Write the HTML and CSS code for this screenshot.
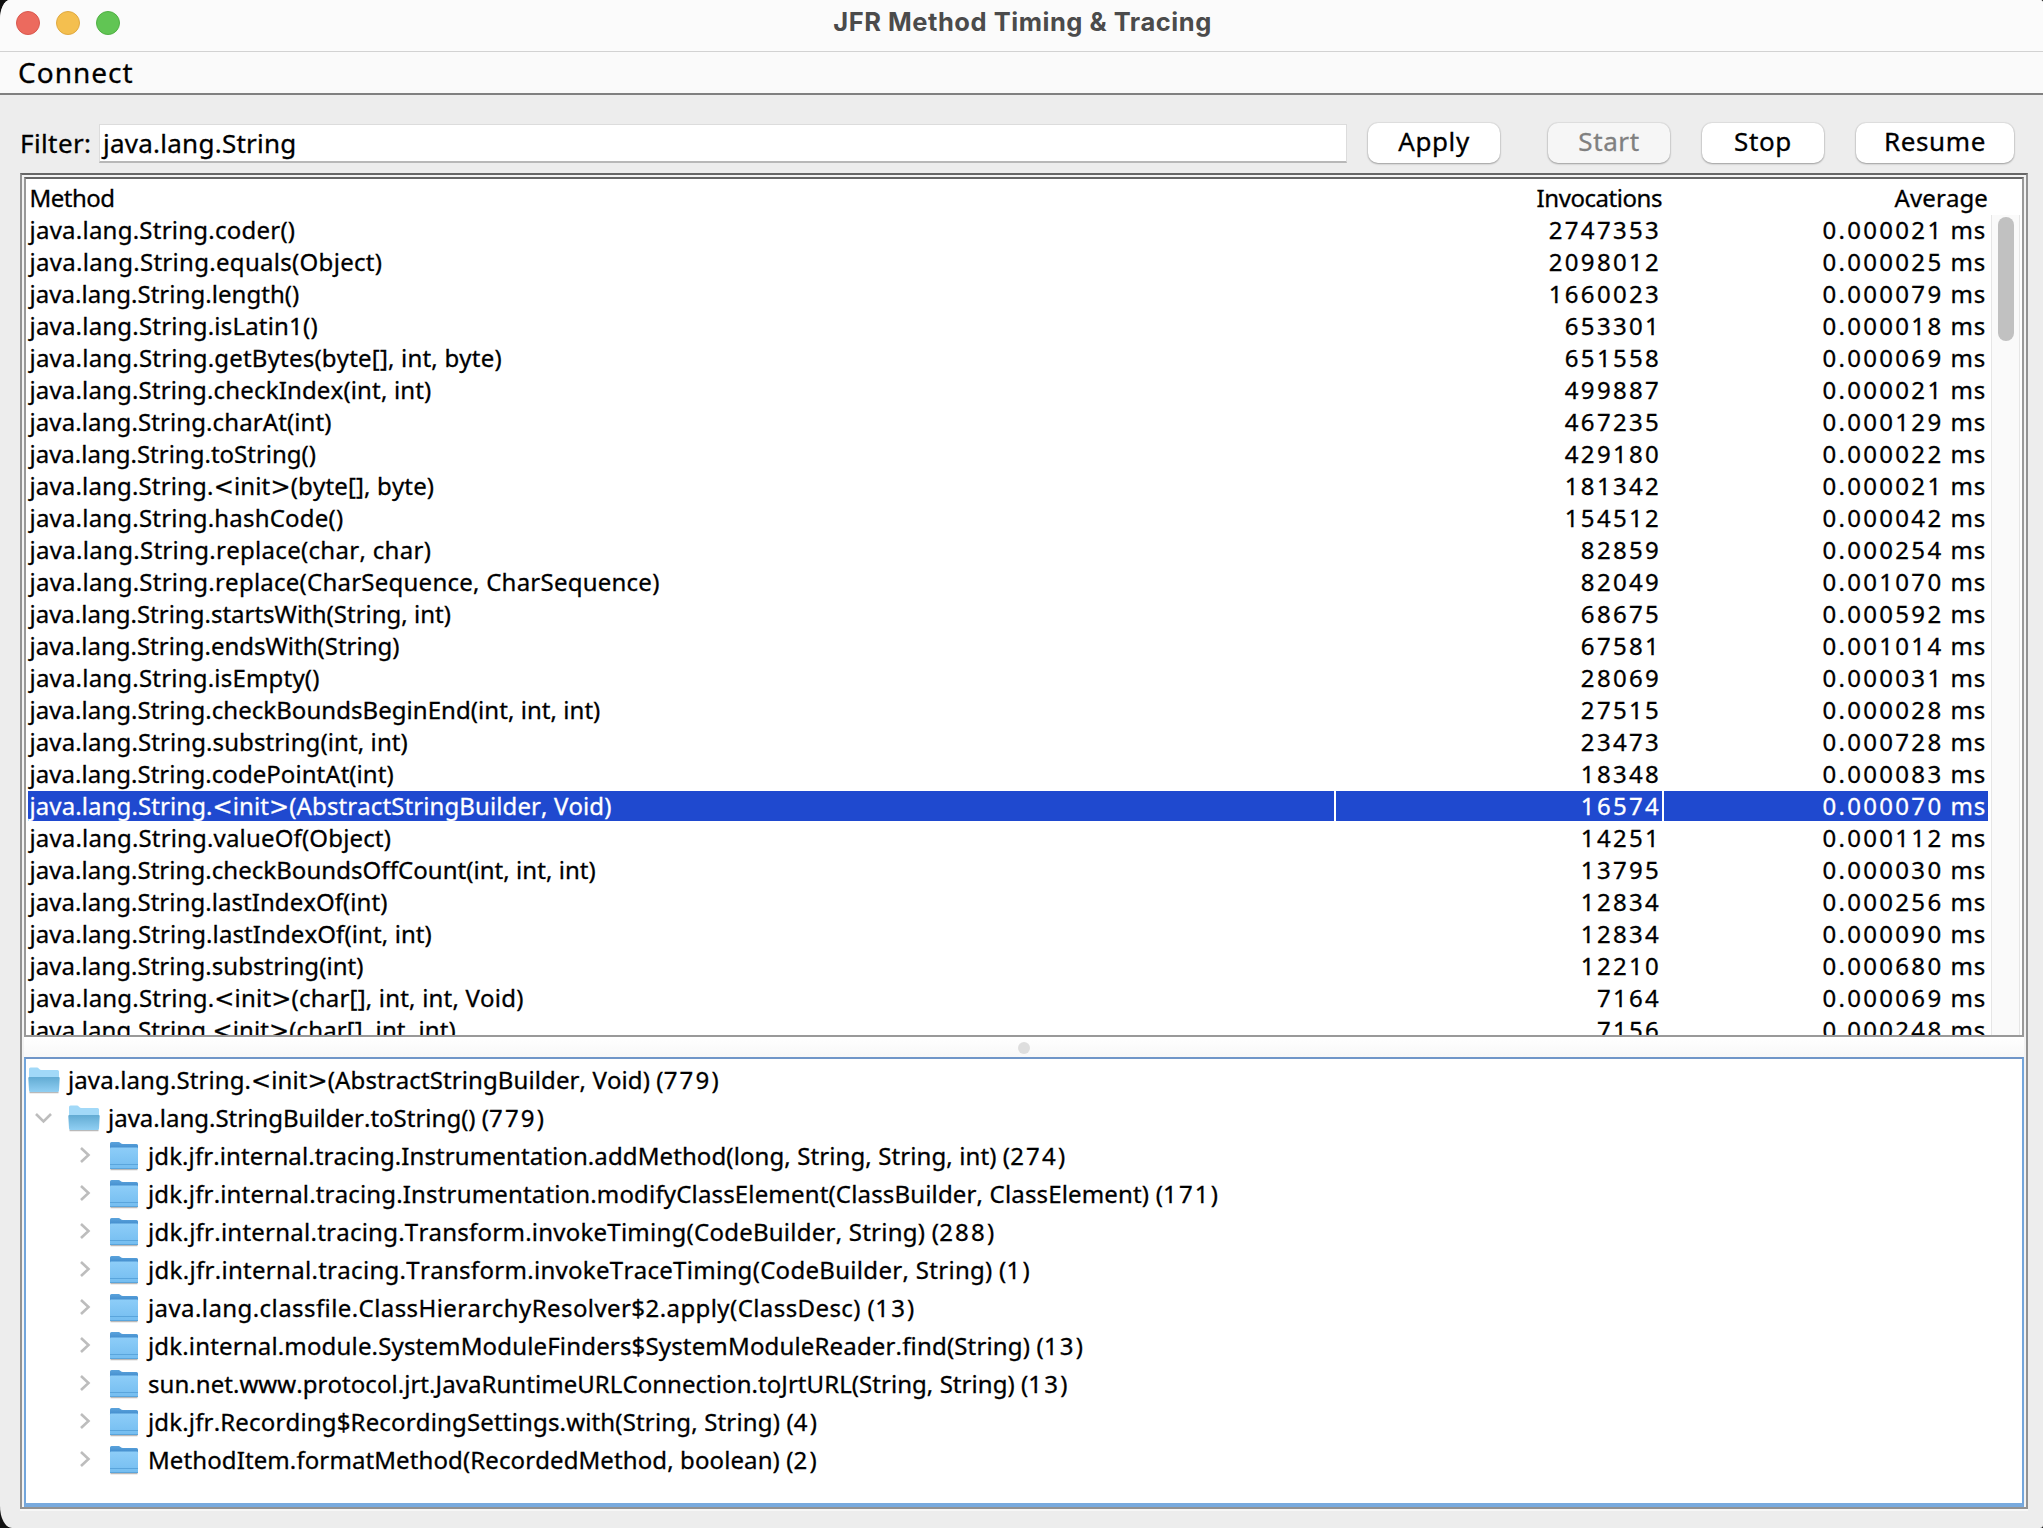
FILE: index.html
```html
<!DOCTYPE html>
<html lang="en">
<head>
<meta charset="utf-8">
<title>JFR Method Timing &amp; Tracing</title>
<link rel="stylesheet" href="styles.css">
</head>
<body>
<svg class="defs" width="0" height="0" aria-hidden="true">
  <defs>
    <linearGradient id="front" x1="0" y1="0" x2="0" y2="1"><stop offset="0" stop-color="#8dcdf8"/><stop offset="1" stop-color="#74bdf0"/></linearGradient>
    <linearGradient id="back" x1="0" y1="0" x2="0" y2="1"><stop offset="0" stop-color="#5ba3dc"/><stop offset="1" stop-color="#2f7cc2"/></linearGradient>
    <linearGradient id="lip" x1="0" y1="0" x2="0" y2="1"><stop offset="0" stop-color="#62abd3"/><stop offset="1" stop-color="#90cff3"/></linearGradient>
    <symbol id="folder" viewBox="0 0 32 32">
      <path d="M2.500 30.500h27" stroke="#b9b9b9" stroke-width="1.500"/>
      <path d="M2 4.500q0-1.500 1.500-1.500h7q1 0 2 1t2.500 1h13.500q1.500 0 1.500 1.500v8H2z" fill="url(#back)"/>
      <path d="M2 9.500q0-1 1-1h26q1 0 1 1V28.500q0 1.500-1.500 1.500h-25q-1.500 0-1.500-1.500z" fill="url(#front)"/>
      <path d="M2 25.500h28M2 29.500h28" stroke="#5aa5dc" stroke-width="1"/>
    </symbol>
    <symbol id="folder-open" viewBox="0 0 32 32">
      <path d="M1.500 29.500h29" stroke="#b9b9b9" stroke-width="1.500"/>
      <path d="M1 6q0-1.500 1.500-1.500h6.500q1 0 2 1.200t2.500 1.300H29.500q1.500 0 1.500 1.500v8H1z" fill="#a2d9f8"/>
      <path d="M.3 15q0-1 1-1h29.400q1 0 1 1l-.7 12.500q0 1.500-1.500 1.500H2.500q-1.500 0-1.500-1.500z" fill="url(#lip)"/>
    </symbol>
    <symbol id="right" viewBox="0 0 16 20"><path d="M5 3l7.500 7L5 17" fill="none" stroke="#bdbdbd" stroke-width="2.600"/></symbol>
    <symbol id="down" viewBox="0 0 20 16"><path d="M2 4l7.500 7.500L17 4" fill="none" stroke="#bdbdbd" stroke-width="2.600"/></symbol>
  </defs>
</svg>
<div class="window">
  <header class="titlebar">
    <div class="lights"><i class="light red"></i><i class="light yellow"></i><i class="light green"></i></div>
    <h1 class="title">JFR Method Timing &amp; Tracing</h1>
  </header>
  <nav class="menubar">Connect</nav>
  <div class="toolbar">
    <label class="label">Filter:</label>
    <div class="field">java.lang.String</div>
    <button class="btn apply">Apply</button>
    <button class="btn start" disabled>Start</button>
    <button class="btn stop">Stop</button>
    <button class="btn resume">Resume</button>
  </div>
  <main class="split">
    <section class="table">
      <div class="row head"><span>Method</span><span>Invocations</span><span class="avg">Average</span></div>
      <div class="scroll">
        <div class="rows">
          <div class="row w25"><span>java.lang.String.coder()</span><span>2747353</span><span>0.000021<i> ms</i></span></div>
          <div class="row w30"><span>java.lang.String.equals(Object)</span><span>2098012</span><span>0.000025<i> ms</i></span></div>
          <div class="row w05"><span>java.lang.String.length()</span><span>1660023</span><span>0.000079<i> ms</i></span></div>
          <div class="row w20"><span>java.lang.String.isLatin1()</span><span>653301</span><span>0.000018<i> ms</i></span></div>
          <div class="row w20"><span>java.lang.String.getBytes(byte[], int, byte)</span><span>651558</span><span>0.000069<i> ms</i></span></div>
          <div class="row w15"><span>java.lang.String.checkIndex(int, int)</span><span>499887</span><span>0.000021<i> ms</i></span></div>
          <div class="row w10"><span>java.lang.String.charAt(int)</span><span>467235</span><span>0.000129<i> ms</i></span></div>
          <div class="row"><span>java.lang.String.toString()</span><span>429180</span><span>0.000022<i> ms</i></span></div>
          <div class="row w15"><span>java.lang.String.<b>&lt;</b>init<b>&gt;</b>(byte[], byte)</span><span>181342</span><span>0.000021<i> ms</i></span></div>
          <div class="row w20"><span>java.lang.String.hashCode()</span><span>154512</span><span>0.000042<i> ms</i></span></div>
          <div class="row w30"><span>java.lang.String.replace(char, char)</span><span>82859</span><span>0.000254<i> ms</i></span></div>
          <div class="row w25"><span>java.lang.String.replace(CharSequence, CharSequence)</span><span>82049</span><span>0.001070<i> ms</i></span></div>
          <div class="row"><span>java.lang.String.startsWith(String, int)</span><span>68675</span><span>0.000592<i> ms</i></span></div>
          <div class="row"><span>java.lang.String.endsWith(String)</span><span>67581</span><span>0.001014<i> ms</i></span></div>
          <div class="row w20"><span>java.lang.String.isEmpty()</span><span>28069</span><span>0.000031<i> ms</i></span></div>
          <div class="row w05"><span>java.lang.String.checkBoundsBeginEnd(int, int, int)</span><span>27515</span><span>0.000028<i> ms</i></span></div>
          <div class="row w10"><span>java.lang.String.substring(int, int)</span><span>23473</span><span>0.000728<i> ms</i></span></div>
          <div class="row w05"><span>java.lang.String.codePointAt(int)</span><span>18348</span><span>0.000083<i> ms</i></span></div>
          <div class="row selected w10"><span>java.lang.String.<b>&lt;</b>init<b>&gt;</b>(AbstractStringBuilder, Void)</span><span>16574</span><span>0.000070<i> ms</i></span></div>
          <div class="row w15"><span>java.lang.String.valueOf(Object)</span><span>14251</span><span>0.000112<i> ms</i></span></div>
          <div class="row w05"><span>java.lang.String.checkBoundsOffCount(int, int, int)</span><span>13795</span><span>0.000030<i> ms</i></span></div>
          <div class="row w05"><span>java.lang.String.lastIndexOf(int)</span><span>12834</span><span>0.000256<i> ms</i></span></div>
          <div class="row w10"><span>java.lang.String.lastIndexOf(int, int)</span><span>12834</span><span>0.000090<i> ms</i></span></div>
          <div class="row w05"><span>java.lang.String.substring(int)</span><span>12210</span><span>0.000680<i> ms</i></span></div>
          <div class="row w20"><span>java.lang.String.<b>&lt;</b>init<b>&gt;</b>(char[], int, int, Void)</span><span>7164</span><span>0.000069<i> ms</i></span></div>
          <div class="row w10"><span>java.lang.String.<b>&lt;</b>init<b>&gt;</b>(char[], int, int)</span><span>7156</span><span>0.000248<i> ms</i></span></div>
        </div>
        <div class="track"><div class="thumb"></div></div>
      </div>
    </section>
    <div class="divider"><i class="grip"></i></div>
    <section class="tree">
      <div class="node w10"><svg class="folder"><use href="#folder-open"/></svg><span>java.lang.String.<b>&lt;</b>init<b>&gt;</b>(AbstractStringBuilder, Void) (<i>779</i>)</span></div>
      <div class="node l1"><svg class="down"><use href="#down"/></svg><svg class="folder"><use href="#folder-open"/></svg><span>java.lang.StringBuilder.toString() (<i>779</i>)</span></div>
      <div class="node l2 w10"><svg class="right"><use href="#right"/></svg><svg class="folder"><use href="#folder"/></svg><span>jdk.jfr.internal.tracing.Instrumentation.addMethod(long, String, String, int) (<i>274</i>)</span></div>
      <div class="node l2 w15"><svg class="right"><use href="#right"/></svg><svg class="folder"><use href="#folder"/></svg><span>jdk.jfr.internal.tracing.Instrumentation.modifyClassElement(ClassBuilder, ClassElement) (<i>171</i>)</span></div>
      <div class="node l2 w25"><svg class="right"><use href="#right"/></svg><svg class="folder"><use href="#folder"/></svg><span>jdk.jfr.internal.tracing.Transform.invokeTiming(CodeBuilder, String) (<i>288</i>)</span></div>
      <div class="node l2 w30"><svg class="right"><use href="#right"/></svg><svg class="folder"><use href="#folder"/></svg><span>jdk.jfr.internal.tracing.Transform.invokeTraceTiming(CodeBuilder, String) (<i>1</i>)</span></div>
      <div class="node l2 w40"><svg class="right"><use href="#right"/></svg><svg class="folder"><use href="#folder"/></svg><span>java.lang.classfile.ClassHierarchyResolver$2.apply(ClassDesc) (<i>13</i>)</span></div>
      <div class="node l2 w15"><svg class="right"><use href="#right"/></svg><svg class="folder"><use href="#folder"/></svg><span>jdk.internal.module.SystemModuleFinders$SystemModuleReader.find(String) (<i>13</i>)</span></div>
      <div class="node l2 w05"><svg class="right"><use href="#right"/></svg><svg class="folder"><use href="#folder"/></svg><span>sun.net.www.protocol.jrt.JavaRuntimeURLConnection.toJrtURL(String, String) (<i>13</i>)</span></div>
      <div class="node l2 w15"><svg class="right"><use href="#right"/></svg><svg class="folder"><use href="#folder"/></svg><span>jdk.jfr.Recording$RecordingSettings.with(String, String) (<i>4</i>)</span></div>
      <div class="node l2 w10"><svg class="right"><use href="#right"/></svg><svg class="folder"><use href="#folder"/></svg><span>MethodItem.formatMethod(RecordedMethod, boolean) (<i>2</i>)</span></div>
    </section>
  </main>
</div>
</body>
</html>
```
FILE: styles.css
```css
* { box-sizing: border-box; }
body { margin: 0; background: #111; width: 2043px; height: 1528px; overflow: hidden; font: 24px/30px "Noto Sans", sans-serif; color: #000; font-kerning: none; font-variant-ligatures: none; -webkit-text-stroke: .3px; }
i { font-style: normal; }
b { font: 24px/1 "DejaVu Sans", sans-serif; }
.defs { position: absolute; }
.window { width: 2043px; height: 1528px; background: #ededed; border-radius: 10px 3px 3px 12px / 20px 3px 3px 22px; overflow: hidden; display: flex; flex-direction: column; }
.titlebar { height: 52px; background: #fbfbfb; border-bottom: 1px solid #d2d2d2; display: grid; grid-template-columns: 200px 1fr 200px; flex: none; }
.lights { display: flex; gap: 16px; padding: 11px 0 0 16px; }
.light { width: 24px; height: 24px; border-radius: 50%; border: 1px solid; }
.red { background: #ec6a5e; border-color: #d9584e; }
.yellow { background: #f4bf4f; border-color: #dfa941; }
.green { background: #61c554; border-color: #50b044; }
.title { margin: 0; padding: 7px 0 0 2px; font: 700 25.5px/30px Inter, sans-serif; letter-spacing: .53px; text-align: center; color: #4b4b4b; -webkit-text-stroke: 0; }
.menubar { height: 43px; background: #fafafa; border-bottom: 2px solid #808080; padding: 4px 18px 0; font-size: 28px; line-height: 32px; letter-spacing: 1px; flex: none; }
.toolbar { height: 78px; padding: 28px 29px 0 20px; display: flex; align-items: flex-start; flex: none; font-size: 26px; }
.label { width: 79px; padding-top: 5px; white-space: nowrap; letter-spacing: .4px; }
.field { width: 1248px; height: 39px; margin: 1px 21px 0 0; background: #fff; border: 1px solid #dcdcdc; border-bottom: 2px solid #b8b8b8; line-height: 36px; padding-left: 3px; letter-spacing: .25px; }
.btn { height: 40px; border: 0; border-radius: 10px; background: #fff; box-shadow: 0 0 1px 1px rgba(0,0,0,.06), 0 1px 2px rgba(0,0,0,.3); font: 26px/30px "Noto Sans", sans-serif; color: #000; padding: 0 0 5px; letter-spacing: .6px; -webkit-text-stroke: .3px; }
.apply { width: 132px; margin-right: 48px; }
.start { width: 122px; margin-right: 32px; background: #f6f6f6; color: #808080; }
.stop { width: 122px; margin-right: 32px; }
.resume { width: 158px; }
.split { flex: none; width: 2008px; height: 1336px; margin-left: 20px; border: 2px solid #929292; border-top-color: #666; padding: 2px; display: flex; flex-direction: column; box-shadow: 0 2px 0 #f7f7f7; background: #f3f3f3; }
.table { height: 860px; background: #fff; border: 2px solid #999; border-top-color: #666; display: flex; flex-direction: column; flex: none; overflow: hidden; }
.row { display: grid; grid-template-columns: 1306px 326px 324px; column-gap: 2px; height: 30px; margin: 0 0 2px 2px; width: 1960px; line-height: 30px; white-space: nowrap; }
.row span:first-child { padding-left: 1.5px; }
.row span + span { text-align: right; letter-spacing: 2.3px; padding-right: 1px; }
.row span + span i { letter-spacing: .8px; }
.row span:last-child { padding-right: 2px; }
.row.head { height: 34px; margin-bottom: 0; padding-top: 4px; flex: none; }
.row.head span { letter-spacing: -.5px; }
.row.head span + span { letter-spacing: -.45px; padding-right: 0; }
.row.head span.avg { letter-spacing: .1px; }
.w05 span:first-of-type { letter-spacing: .05px; }
.w10 span:first-of-type { letter-spacing: .1px; }
.w15 span:first-of-type { letter-spacing: .16px; }
.w20 span:first-of-type { letter-spacing: .2px; }
.w25 span:first-of-type { letter-spacing: .24px; }
.w30 span:first-of-type { letter-spacing: .3px; }
.w40 span:first-of-type { letter-spacing: .42px; }
.scroll { display: flex; height: 822px; overflow: hidden; }
.rows { flex: 1; padding-top: 2px; }
.track { width: 29px; background: #fafafa; border: 1px solid #e6e6e6; border-width: 0 1px; padding: 2px 4px 0 6px; margin: 2px 2px 0 0; }
.thumb { width: 16px; height: 124px; border-radius: 8px; background: #c1c1c1; }
.selected span { background: #1f49cf; color: #fff; }
.divider { height: 20px; flex: none; background: linear-gradient(#fff, #f8f8f8); display: flex; align-items: center; justify-content: center; padding-top: 2px; }
.grip { width: 12px; height: 12px; border-radius: 50%; background: #dedede; }
.tree { flex: none; height: 450px; background: #fff; border: 2px solid #72a5db; border-top-color: #7096c8; border-bottom: 4px solid #78aade; padding-top: 2px; }
.node { height: 38px; display: flex; align-items: center; white-space: nowrap; padding-left: 2px; }
.node span { line-height: 38px; }
.node i { letter-spacing: 2.2px; }
.folder { width: 32px; height: 32px; margin: -2px 8px 0 0; }
.l1 { padding-left: 8px; }
.l2 { padding-left: 50px; }
.down { width: 20px; height: 16px; margin: 0 14px 0 0; }
.right { width: 16px; height: 20px; margin: -3px 16px 0 0; }
```
